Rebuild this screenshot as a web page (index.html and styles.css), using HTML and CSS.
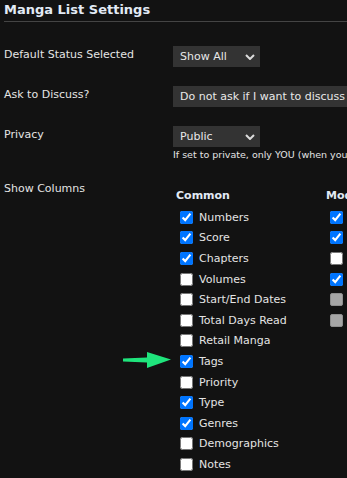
FILE: index.html
```html
<!DOCTYPE html>
<html lang="en">
<head>
    <meta charset="UTF-8">
    <title>Manga List Settings</title>
    <link rel="stylesheet" href="styles.css">
</head>
<body>
    <div class="page">
        <h2 class="title">Manga List Settings</h2>

        <div class="settings">
            <div class="label">Default Status Selected</div>
            <div class="field">
                <span class="select-wrap narrow">
                    <select class="select">
                        <option>Show All</option>
                        <option>Reading</option>
                        <option>Completed</option>
                    </select>
                    <svg class="chevron" width="10" height="6" viewBox="0 0 10 6"><path d="M1 1 L5 5 L9 1" fill="none" stroke="#dcdcdc" stroke-width="2"/></svg>
                </span>
            </div>

            <div class="label">Ask to Discuss?</div>
            <div class="field">
                <span class="select-wrap wide">
                    <select class="select">
                        <option>Do not ask if I want to discuss a chapter after updating</option>
                    </select>
                </span>
            </div>

            <div class="label">Privacy</div>
            <div class="field">
                <span class="select-wrap narrow">
                    <select class="select">
                        <option>Public</option>
                        <option>Private</option>
                    </select>
                    <svg class="chevron" width="10" height="6" viewBox="0 0 10 6"><path d="M1 1 L5 5 L9 1" fill="none" stroke="#dcdcdc" stroke-width="2"/></svg>
                </span>
                <div class="note">If set to private, only YOU (when you're logged in) can view your list.</div>
            </div>

            <div class="label columns-label">Show Columns</div>
            <div class="field">
                <div class="cols">
                    <div class="col">
                        <h4>Common</h4>
                        <ul>
                            <li><input type="checkbox" checked> Numbers</li>
                            <li><input type="checkbox" checked> Score</li>
                            <li><input type="checkbox" checked> Chapters</li>
                            <li><input type="checkbox"> Volumes</li>
                            <li><input type="checkbox"> Start/End Dates</li>
                            <li><input type="checkbox"> Total Days Read</li>
                            <li><input type="checkbox"> Retail Manga</li>
                            <li><input type="checkbox" checked> Tags</li>
                            <li><input type="checkbox"> Priority</li>
                            <li><input type="checkbox" checked> Type</li>
                            <li><input type="checkbox" checked> Genres</li>
                            <li><input type="checkbox"> Demographics</li>
                            <li><input type="checkbox"> Notes</li>
                        </ul>
                    </div>
                    <div class="col">
                        <h4>Modifiers</h4>
                        <ul>
                            <li><input type="checkbox" checked> Image</li>
                            <li><input type="checkbox" checked> Progress</li>
                            <li><input type="checkbox"> Rereading</li>
                            <li><input type="checkbox" checked> Edit</li>
                            <li><input type="checkbox" class="cb-off" disabled> Storage</li>
                            <li><input type="checkbox" class="cb-off" disabled> Add</li>
                        </ul>
                    </div>
                </div>
            </div>
        </div>
    </div>

    <!-- annotation arrow pointing at Tags -->
    <svg class="arrow" width="54" height="20" viewBox="0 0 54 20">
        <polygon points="1,7.5 25,6.5 25,1 49,8.5 25,17 25,11.5 1,10.5" fill="#1fe47c"/>
    </svg>
</body>
</html>
```

FILE: styles.css
```css
html, body {
    overflow: hidden;
}
body {
    margin: 0;
    background-color: #121212;
    color: #e4e4e4;
    font-family: "DejaVu Sans", Verdana, sans-serif;
    font-size: 11px;
}
.page {
    padding: 2px 0 0 4px;
}
.title {
    margin: 0;
    font-size: 13px;
    font-weight: bold;
    line-height: 16px;
    padding-bottom: 3px;
    border-bottom: 1px solid #444;
    color: #e2eaf5;
}
.settings {
    display: grid;
    grid-template-columns: 169px 1fr;
    row-gap: 19px;
    margin-top: 24px;
}
.label {
    padding-top: 2px;
    line-height: 13px;
}
.columns-label {
    padding-top: 3px;
}
.select-wrap {
    position: relative;
    display: inline-block;
}
.select {
    appearance: none;
    -webkit-appearance: none;
    height: 21px;
    border: none;
    border-radius: 0;
    background-color: #333;
    color: #e8e8e8;
    font-family: "DejaVu Sans", Verdana, sans-serif;
    font-size: 11px;
    padding: 0 7px;
    margin: 0;
}
.narrow .select {
    width: 87px;
}
.wide .select {
    width: 320px;
}
.chevron {
    position: absolute;
    right: 5px;
    top: 8px;
}
.note {
    font-size: 9.5px;
    margin-top: 2px;
    white-space: nowrap;
}
.cols {
    display: flex;
    padding-left: 3px;
    margin-top: 10px;
}
.col {
    width: 150px;
    flex-shrink: 0;
}
.col h4 {
    margin: 0 0 5px;
    font-size: 11px;
    line-height: 13px;
    color: #e2eaf5;
    white-space: nowrap;
}
.col ul {
    list-style: none;
    margin: 0;
    padding: 0;
}
.col li {
    display: flex;
    align-items: center;
    height: 20.6px;
    white-space: nowrap;
}
.col input {
    width: 13px;
    height: 13px;
    margin: 0 6px 0 4px;
    accent-color: #0075ff;
}
.col input.cb-off {
    appearance: none;
    -webkit-appearance: none;
    background-color: #a6a6a6;
    border: 1px solid #8e8e8e;
    border-radius: 2px;
    box-sizing: border-box;
}
.arrow {
    position: absolute;
    left: 122px;
    top: 351px;
}
```
